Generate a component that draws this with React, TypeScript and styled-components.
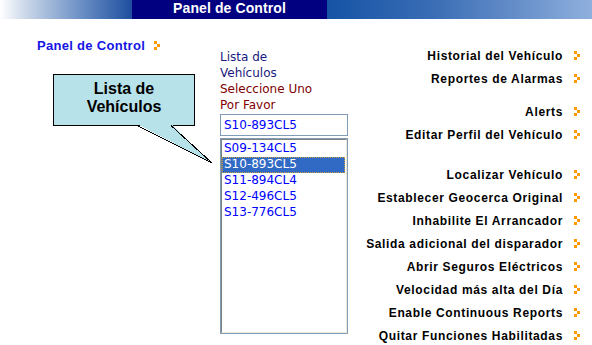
import styled, { createGlobalStyle } from "styled-components";

const GlobalStyle = createGlobalStyle`
  html, body {
    margin: 0;
    padding: 0;
    background: #ffffff;
  }
  body {
    font-family: "Liberation Sans", Arial, sans-serif;
  }
`;

const vehicles = ["S09-134CL5", "S10-893CL5", "S11-894CL4", "S12-496CL5", "S13-776CL5"];
const selected = "S10-893CL5";

const menuGroups = [
  ["Historial del Vehículo", "Reportes de Alarmas"],
  ["Alerts", "Editar Perfil del Vehículo"],
  [
    "Localizar Vehículo",
    "Establecer Geocerca Original",
    "Inhabilite El Arrancador",
    "Salida adicional del disparador",
    "Abrir Seguros Eléctricos",
    "Velocidad más alta del Día",
    "Enable Continuous Reports",
    "Quitar Funciones Habilitadas",
  ],
];

const Arrow = () => (
  <svg width="6" height="9" viewBox="0 0 6 9" shapeRendering="crispEdges">
    <rect x="0" y="0" width="3" height="3" fill="#ff9900" />
    <rect x="3" y="3" width="3" height="3" fill="#ff9900" />
    <rect x="0" y="6" width="3" height="3" fill="#ff9900" />
  </svg>
);

export default function App() {
  return (
    <Page>
      <GlobalStyle />
      <Header>
        <FadeLeft />
        <Title>Panel de Control</Title>
        <FadeRight />
      </Header>
      <Body>
        <LeftCol>
          <HomeLink>
            <span>Panel de Control</span>
            <Arrow />
          </HomeLink>
          <Callout>
            <CalloutText>Lista de</CalloutText>
            <CalloutText>Vehículos</CalloutText>
            <Tail width="165" height="95" viewBox="0 0 165 95" shapeRendering="crispEdges">
              <polygon points="84,50 118,50 159,89" fill="#b8e2ea" />
              <line x1="84" y1="51.5" x2="159" y2="89" stroke="#000" strokeWidth="1" />
              <line x1="118" y1="51.5" x2="159" y2="89" stroke="#000" strokeWidth="1" />
            </Tail>
          </Callout>
        </LeftCol>

        <MidCol>
          <Prompt>Lista de</Prompt>
          <Prompt>Vehículos</Prompt>
          <Prompt $warn>Seleccione Uno</Prompt>
          <Prompt $warn>Por Favor</Prompt>
          <Field>{selected}</Field>
          <ListBox>
            <ListInner>
              {vehicles.map((v) => (
                <Option key={v} $active={v === selected}>
                  {v}
                </Option>
              ))}
            </ListInner>
          </ListBox>
        </MidCol>

        <RightCol>
          {menuGroups.map((group, gi) => (
            <MenuGroup key={gi} $gap={gi === 0 ? 0 : gi === 1 ? 10 : 17}>
              {group.map((item) => (
                <MenuItem key={item}>
                  <span>{item}</span>
                  <Arrow />
                </MenuItem>
              ))}
            </MenuGroup>
          ))}
        </RightCol>
      </Body>
    </Page>
  );
}

const Page = styled.div`
  width: 592px;
  height: 345px;
  overflow: hidden;
  background: #ffffff;
`;

const Header = styled.div`
  display: flex;
  height: 19px;
`;

const FadeLeft = styled.div`
  flex: 0 0 132px;
  background: linear-gradient(to right, #ffffff 0%, #c9d6e8 20%, #6e92c6 60%, #1d4e9f 100%);
`;

const Title = styled.div`
  flex: 0 0 195px;
  background: #000080;
  color: #ffffff;
  font-weight: bold;
  font-size: 14px;
  line-height: 17px;
  text-align: center;
  letter-spacing: 0.1px;
`;

const FadeRight = styled.div`
  flex: 1;
  background: linear-gradient(to right, #1553a5 0%, #3a6db5 40%, #6a92cb 75%, #8fb0de 100%);
`;

const Body = styled.div`
  display: flex;
`;

const LeftCol = styled.div`
  flex: 0 0 183px;
  padding: 18.5px 0 0 37px;
`;

const HomeLink = styled.div`
  display: flex;
  align-items: center;
  gap: 9px;
  height: 16px;
  color: #1414e6;
  font-weight: bold;
  font-size: 13px;
  letter-spacing: 0.3px;
  white-space: nowrap;
`;

const Callout = styled.div`
  position: relative;
  box-sizing: border-box;
  width: 142px;
  height: 52px;
  margin: 20.5px 0 0 16px;
  padding-top: 5px;
  background: #b8e2ea;
  border: 1px solid #000000;
`;

const CalloutText = styled.div`
  font-weight: bold;
  font-size: 16px;
  line-height: 18px;
  text-align: center;
  color: #000000;
`;

const Tail = styled.svg`
  position: absolute;
  left: -1px;
  top: -1px;
  overflow: visible;
`;

const MidCol = styled.div`
  flex: 0 0 128px;
  padding-top: 29.5px;
  font-family: "DejaVu Sans", Verdana, sans-serif;
  font-size: 12px;
`;

const Prompt = styled.div<{ $warn?: boolean }>`
  line-height: 16px;
  color: ${(p) => (p.$warn ? "#800000" : "#1a1a80")};
  white-space: nowrap;
`;

const Field = styled.div`
  box-sizing: border-box;
  height: 22px;
  margin-top: 1.5px;
  padding: 0 3px;
  border: 1px solid #7f9db9;
  color: #0000ff;
  line-height: 20px;
`;

const ListBox = styled.div`
  box-sizing: border-box;
  height: 196px;
  margin-top: 2px;
  border: 1px solid #7f9db9;
`;

const ListInner = styled.div`
  box-sizing: border-box;
  height: 100%;
  padding-top: 1px;
  border-top: 1px solid #808080;
  border-left: 1px solid #808080;
  border-right: 1px solid #ece9d8;
  border-bottom: 1px solid #ece9d8;
`;

const Option = styled.div<{ $active?: boolean }>`
  box-sizing: border-box;
  height: 16px;
  margin-right: 1px;
  padding-left: 2px;
  line-height: 15px;
  color: ${(p) => (p.$active ? "#ffffff" : "#0000ff")};
  background: ${(p) => (p.$active ? "#316ac5" : "transparent")};
  outline: ${(p) => (p.$active ? "1px dotted #c8a040" : "none")};
  outline-offset: -1px;
`;

const RightCol = styled.div`
  flex: 1;
  display: flex;
  flex-direction: column;
  align-items: flex-end;
  padding: 25px 12px 0 0;
`;

const MenuGroup = styled.div<{ $gap: number }>`
  display: flex;
  flex-direction: column;
  align-items: flex-end;
  margin-top: ${(p) => p.$gap}px;
`;

const MenuItem = styled.div`
  display: flex;
  align-items: center;
  gap: 11px;
  height: 23px;
  font-weight: bold;
  font-size: 12px;
  letter-spacing: 0.65px;
  color: #000000;
  white-space: nowrap;
`;
